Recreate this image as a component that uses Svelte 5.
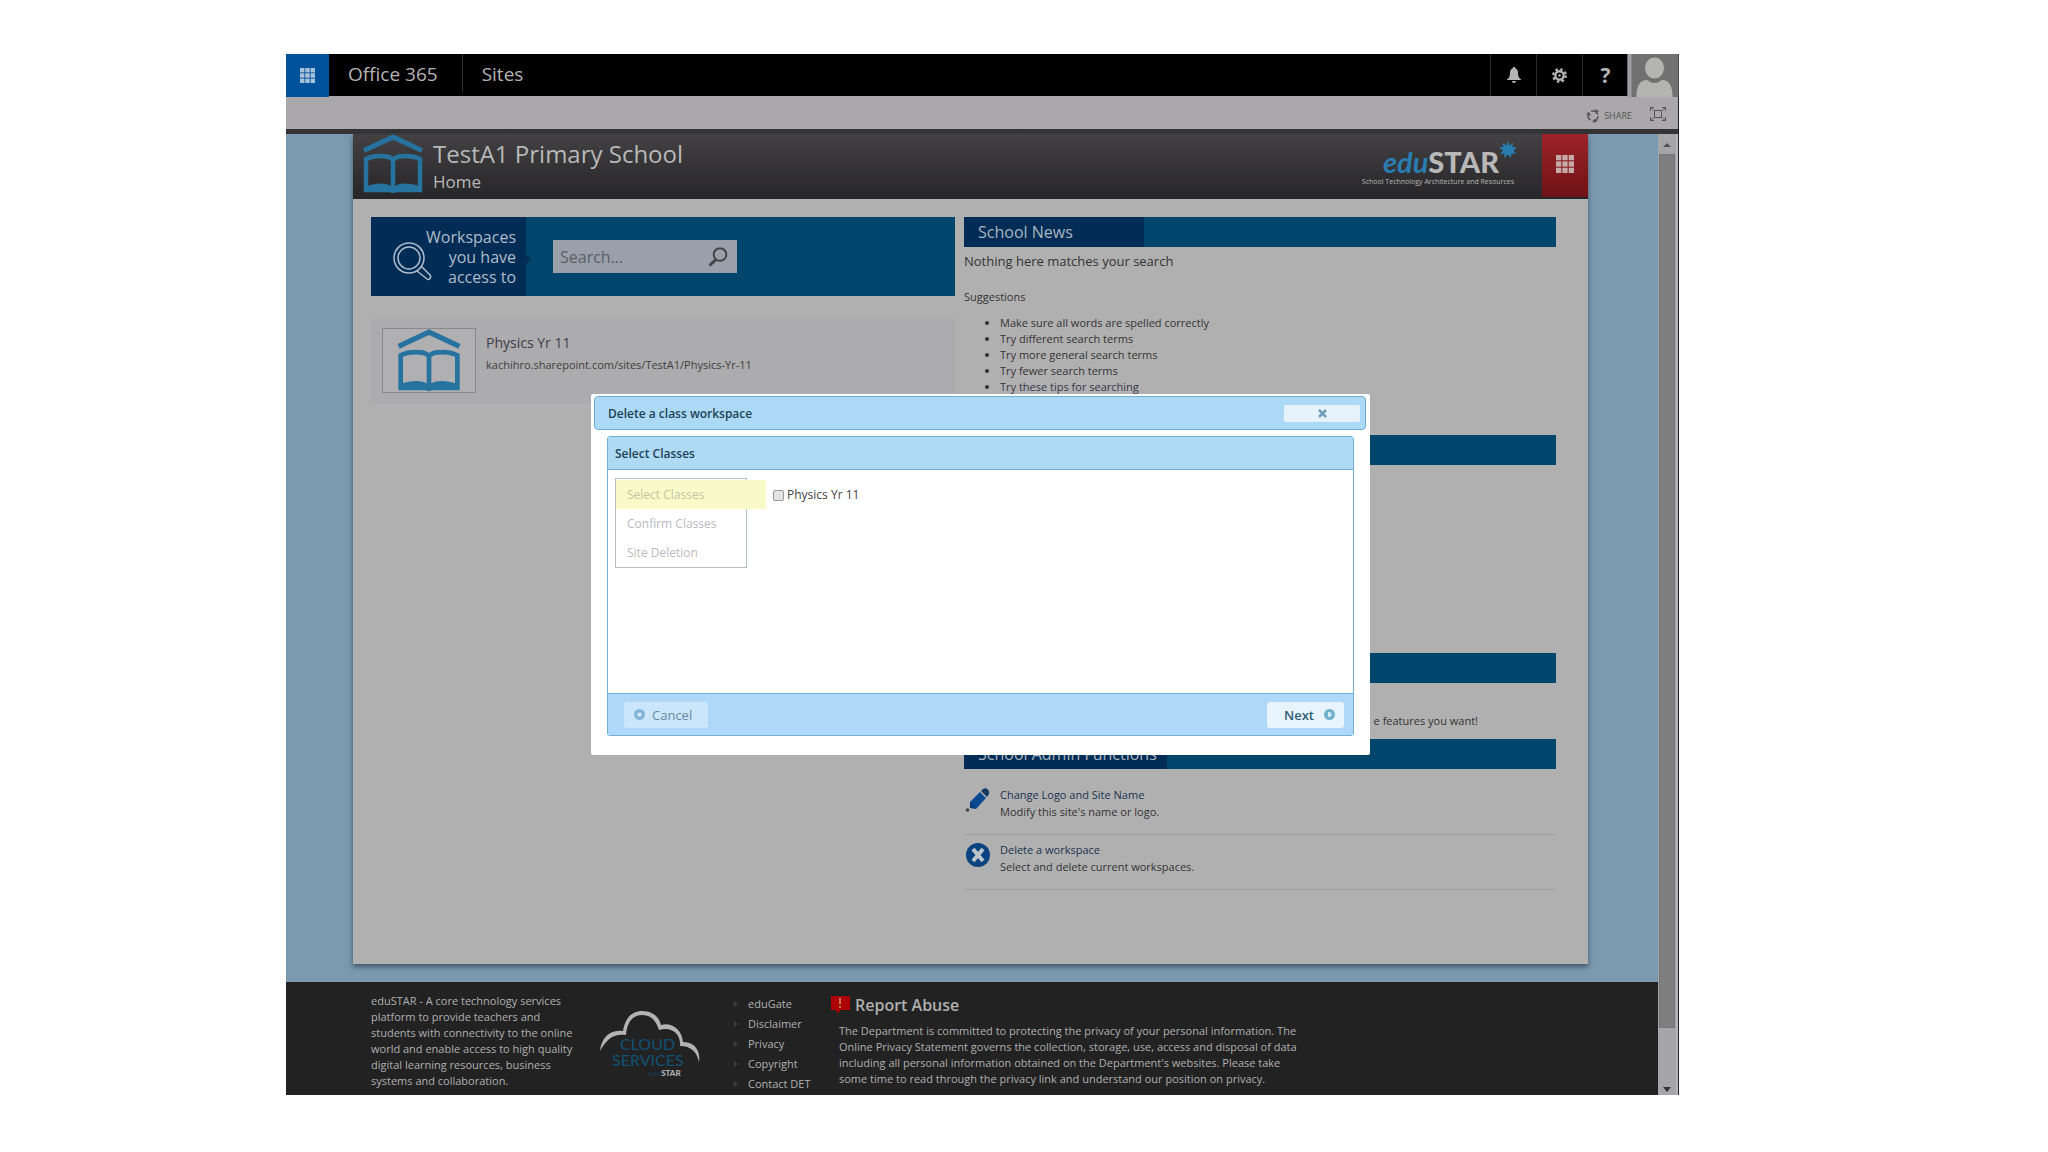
<script>
  const tips = [
    'Make sure all words are spelled correctly',
    'Try different search terms',
    'Try more general search terms',
    'Try fewer search terms',
  ];
  const steps = ['Select Classes', 'Confirm Classes', 'Site Deletion'];
  const links = ['eduGate', 'Disclaimer', 'Privacy', 'Copyright', 'Contact DET'];
  const dots = [0, 1, 2];
</script>

{#snippet waffle(size)}
  <svg width={size} height={size} viewBox="0 0 17 17" aria-hidden="true">
    {#each dots as r}
      {#each dots as c}
        <rect x={c * 6} y={r * 6} width="5" height="5" fill="currentColor" />
      {/each}
    {/each}
  </svg>
{/snippet}

{#snippet book()}
  <svg class="book" viewBox="0 0 60 60" aria-hidden="true">
    <path d="M1 16.500L30 3l29 13.500" fill="none" stroke="currentColor" stroke-width="5" />
    <path d="M30 26c-3-4-8-4-13-4-5 0-9 .5-14 3v31h24l3 1 3-1h24V25c-5-2.500-9-3-14-3-5 0-10 0-13 4zv30" fill="none" stroke="currentColor" stroke-width="4.500" />
    <path d="M4 52c9-3 19-4 26 1 7-5 17-4 26-1v5H4z" fill="currentColor" />
  </svg>
{/snippet}

<div class="page">
  <div class="frame">
    <header class="suite">
      <button class="launcher" aria-label="App launcher">{@render waffle(15)}</button>
      <a class="brand" href="#office">Office 365</a>
      <a class="sites" href="#sites">Sites</a>
      <span class="grow"></span>
      <button class="tool" aria-label="Notifications">
        <svg width="14" height="16" viewBox="0 0 14 16"><path d="M7 0c1 0 1.500.7 1.500 1.600C10.500 2.300 11 4 11 6c0 3.500 1 5 3 6.500V13H0v-.5C2 11 3 9.500 3 6c0-2 .5-3.700 2.500-4.400C5.500.7 6 0 7 0zM5 14h4c0 1-.8 2-2 2s-2-1-2-2z" fill="currentColor" /></svg>
      </button>
      <button class="tool" aria-label="Settings">
        <svg width="15" height="15" viewBox="0 0 16 16"><circle cx="8" cy="8" r="4.500" fill="none" stroke="currentColor" stroke-width="2.600" /><circle cx="8" cy="8" r="6.700" fill="none" stroke="currentColor" stroke-width="2.400" stroke-dasharray="2.700 2.560" /><circle cx="8" cy="8" r="1.300" fill="currentColor" /></svg>
      </button>
      <button class="tool help" aria-label="Help">?</button>
      <button class="avatar" aria-label="Profile">
        <svg width="52" height="43" viewBox="0 0 51 43"><rect width="51" height="43" fill="#717171" /><rect width="4" height="43" fill="#9a9da3" /><path d="M9 43c0-11 3-17 11-17 2 2 4 3 7 3s5-1 7-3c8 0 11 6 11 17z" fill="#b4b4b2" /><ellipse cx="27" cy="14" rx="10" ry="11" fill="#b4b4b2" stroke="#717171" /></svg>
      </button>
    </header>

    <div class="ribbon">
      <button class="share">
        <svg width="14" height="14" viewBox="0 0 14 14"><circle cx="7" cy="7" r="5" fill="none" stroke="currentColor" stroke-width="1.500" stroke-dasharray="8 2.470" /><path d="M0 5l3-2 2 4zM9 0l4 2-3 3zM7 14l1-4 4 2z" fill="currentColor" /></svg>
        SHARE
      </button>
      <button class="focus" aria-label="Focus on content">
        <svg width="16" height="14" viewBox="0 0 16 14" fill="none" stroke="currentColor"><rect x="4.500" y="3.500" width="7" height="7" /><path d="M.5 4V.5H4M.5.5l3 2.500M12 .5h3.500V4M15.500.5l-3 2.500M.5 10v3.500H4M.5 13.500l3-2.500M12 13.500h3.500V10M15.500 13.500l-3-2.500" /></svg>
      </button>
    </div>

    <div class="body">
      <div class="scroll">
        <main class="sheet">
          <div class="masthead">
            {@render book()}
            <div class="titles">
              <h1>TestA1 Primary School</h1>
              <a href="#home">Home</a>
            </div>
            <span class="grow"></span>
            <div class="edustar">
              <div class="word"><i>edu</i><b>STAR</b>
                <svg width="18" height="18" viewBox="0 0 18 18"><path d="M9 0l1.500 4.500L14 1.500l-.5 4.500 4.500.5-3.500 3L17 13l-4.500-.5L12 17l-3-3.500L5 17l.5-4.500L1 13l3-3.500L0 6.500 4.500 6 3 2l4.500 2.500z" fill="#2a7db1" /></svg>
              </div>
              <small>School Technology Architecture and Resources</small>
            </div>
            <button class="red" aria-label="Menu">{@render waffle(18)}</button>
          </div>

          <div class="columns">
            <section class="left">
              <div class="finder">
                <div class="finder-label">
                  <svg width="42" height="40" viewBox="0 0 42 40" fill="none" stroke="currentColor" stroke-width="1.500"><circle cx="17" cy="16" r="15" /><circle cx="17" cy="16" r="11" /><path d="M25 29l10 8c2 1.500 5-1.500 3-4l-9-9" /></svg>
                  <span>Workspaces<br />you have<br />access to</span>
                </div>
                <form class="search">
                  <input type="text" aria-label="Search workspaces" placeholder="Search..." />
                  <button type="button" aria-label="Search">
                    <svg width="20" height="20" viewBox="0 0 20 20" fill="none" stroke="currentColor"><circle cx="12" cy="7.500" r="6.300" stroke-width="2" /><path d="M8 12.500L1.500 18.500" stroke-width="3" /></svg>
                  </button>
                </form>
              </div>
              <article class="workspace">
                <div class="thumb">{@render book()}</div>
                <div>
                  <a href="#physics">Physics Yr 11</a>
                  <p>kachihro.sharepoint.com/sites/TestA1/Physics-Yr-11</p>
                </div>
              </article>
            </section>

            <section class="right">
              <div class="news">
                <h2><span>School News</span></h2>
                <p class="none">Nothing here matches your search</p>
                <p class="suggest">Suggestions</p>
                <ul>
                  {#each tips as tip}<li>{tip}</li>{/each}
                  <li><a href="#tips">Try these tips for searching</a></li>
                </ul>
              </div>
              <div class="block"><h2></h2></div>
              <div class="promo">
                <h2></h2>
                <p>e features you want!</p>
              </div>
              <h2><span>School Admin Functions</span></h2>
              <div class="admin first">
                <svg width="28" height="28" viewBox="0 0 28 28"><path d="M6 16L16 6l6 6-10 11-6-2z" fill="#0b4a92" /><path d="M17 5l2-2c3-2 7 1 6 5l-2 3z" fill="#173a63" /><path d="M6 16l6 7-6-1z" fill="#0a3a74" /><circle cx="3.500" cy="24" r="1.800" fill="#444" /></svg>
                <div><a href="#logo">Change Logo and Site Name</a><p>Modify this site's name or logo.</p></div>
              </div>
              <div class="admin">
                <svg width="28" height="28" viewBox="0 0 28 28"><circle cx="14" cy="14" r="12" fill="#0a4380" /><path d="M9 8l10 12M19 8L9 20" stroke="#bcc4cc" stroke-width="4" /></svg>
                <div><a href="#delete">Delete a workspace</a><p>Select and delete current workspaces.</p></div>
              </div>
            </section>
          </div>
        </main>

        <footer>
          <p class="about">eduSTAR - A core technology services platform to provide teachers and students with connectivity to the online world and enable access to high quality digital learning resources, business systems and collaboration.</p>
          <svg class="cloud" width="106" height="74" viewBox="0 0 106 74" role="img" aria-label="Cloud Services eduSTAR">
            <path d="M2 43C3 30 12 21 25 23 27 9 35 3 44 3c11 0 17 6 19 14 10-3 21 4 22 17 10 0 18 7 16 20-2-10-8-16-19-16 1-12-8-20-21-16C57 10 51 7 44 7c-9 0-15 7-16 20C15 25 8 32 2 43z" fill="#b2b2b2" />
            <text x="22" y="42" font-size="16">CLOUD</text>
            <text x="14" y="58" font-size="16">SERVICES</text>
            <text x="50" y="68" font-size="8"><tspan fill="#173c50">edu</tspan><tspan font-weight="900" fill="#b2b2b2">STAR</tspan></text>
          </svg>
          <ul class="links">
            {#each links as l}<li><a href="#{l}">{l}</a></li>{/each}
          </ul>
          <div class="abuse">
            <h3>
              <svg width="20" height="20" viewBox="0 0 20 20"><path d="M1 1h19v14H10l-2 4-2-4H1z" fill="#ae0006" /><path d="M10 3v6M10 11v2" stroke="#c9a15a" stroke-width="1.500" /></svg>
              Report Abuse
            </h3>
            <p>The Department is committed to protecting the privacy of your personal information. The Online Privacy Statement governs the collection, storage, use, access and disposal of data including all personal information obtained on the Department's websites. Please take some time to read through the privacy link and understand our position on privacy.</p>
          </div>
        </footer>
      </div>
      <div class="bar" aria-hidden="true">
        <svg width="18" height="20" viewBox="0 0 18 20"><path d="M5 13l4-4 4 4z" fill="#555" /></svg>
        <div class="thumb-bar"></div>
        <svg width="18" height="12" viewBox="0 0 18 12"><path d="M5 4h8l-4 5z" fill="#333" /></svg>
      </div>
    </div>

    <div class="dialog" role="dialog" aria-label="Delete a class workspace">
      <div class="dialog-title">
        <strong>Delete a class workspace</strong>
        <button aria-label="Close">
          <svg width="9" height="9" viewBox="0 0 9 9"><path d="M1 1l7 7M8 1L1 8" stroke="#6d9db7" stroke-width="2.500" /></svg>
        </button>
      </div>
      <div class="panel">
        <h2 class="panel-head">Select Classes</h2>
        <div class="panel-body">
          <ol>
            {#each steps as s, i}<li class:current={i === 0}>{s}</li>{/each}
          </ol>
          <label><input type="checkbox" /><span>Physics Yr 11</span></label>
        </div>
        <div class="panel-foot">
          <button class="cancel">
            <svg width="11" height="11" viewBox="0 0 11 11"><circle cx="5.500" cy="5.500" r="5.500" fill="#83b5d8" /><path d="M4 4l3 3M7 4L4 7" stroke="#d5eafb" stroke-width="2" /></svg>
            Cancel
          </button>
          <button class="next">
            Next
            <svg width="11" height="11" viewBox="0 0 11 11"><circle cx="5.500" cy="5.500" r="5.500" fill="#6fb0ca" /><path d="M4 3h2l2 2.500L6 8H4z" fill="#d5eafb" /></svg>
          </button>
        </div>
      </div>
    </div>
  </div>
</div>

<style>
  :global(body) { background: #fefefe; }
  .page {
    padding: 54px 369px 56px 286px;
    font: 11px/16px 'Open Sans', 'Noto Sans', sans-serif;
    color: #333;
  }
  .page :global(*) { box-sizing: border-box; }
  svg { display: block; flex: none; }
  h1, h2, h3, p, ul, ol { margin: 0; padding: 0; font-weight: 400; }
  a { color: inherit; text-decoration: none; }
  button { font: inherit; color: inherit; border: 0; padding: 0; background: none; display: flex; align-items: center; justify-content: center; }
  .grow { flex: 1; }
  .frame { position: relative; border-right: 1px solid #18222c; }

  .suite { display: flex; height: 42px; background: #000; color: #b4b4b4; font-size: 19px; line-height: 41px; }
  .launcher { width: 43px; height: 43px; background: #00529a; color: #a8c2dc; }
  .brand { padding: 0 24px 0 19px; }
  .sites { padding-left: 19px; border-left: 1px solid #333; height: 38px; }
  .tool { width: 46px; border-left: 1px solid #2b2b2b; }
  .help { font-size: 21px; font-weight: 700; }
  .avatar { width: 50px; height: 43px; }

  .ribbon { display: flex; justify-content: flex-end; gap: 18px; height: 38px; padding: 2px 12px 0 0; background: #aaa8aa; border-bottom: 5px solid #343436; color: #555; }
  .share { gap: 4px; font-size: 9px; padding-top: 5px; }

  .body { display: flex; background: #7b99af; }
  .scroll { flex: 1; min-width: 0; }
  .sheet { margin: 0 70px 18px 67px; min-height: 830px; background: #b1b0b1; box-shadow: 0 3px 5px #40556a; }
  .masthead { display: flex; height: 65px; background: linear-gradient(#434144, #262527); color: #b8b8b8; }
  .book { width: 60px; height: 60px; color: #27739f; }
  .masthead .book { margin-left: 10px; }
  .titles { padding-left: 10px; }
  h1 { font-size: 24px; line-height: 40px; }
  .titles a { display: block; font-size: 17px; line-height: 16px; }
  .edustar { width: 160px; margin-right: 24px; padding-top: 7px; }
  .word { display: flex; justify-content: flex-end; font: 700 29px/42px Lato, sans-serif; height: 35px; padding-right: 1px; color: #b8b8b8; }
  .word i { color: #2a7db1; }
  small { display: block; font-size: 7px; line-height: 12px; white-space: nowrap; text-align: center; }
  .red { width: 46px; height: 63px; padding-bottom: 3px; background: linear-gradient(#9c2428, #6f1217); color: #c5aaa6; }

  .columns { display: grid; grid-template-columns: 584fr 592fr; gap: 9px; padding: 18px 32px 0 18px; }
  .finder { display: flex; align-items: center; height: 79px; background: #00456b; }
  .finder-label { display: flex; align-items: center; justify-content: flex-end; width: 155px; height: 79px; padding-right: 10px; background: #002c55; color: #b0bccb; font-size: 16px; line-height: 20px; text-align: right; position: relative; }
  .finder-label svg { position: absolute; left: 21px; top: 25px; }
  .finder-label::after { content: ''; position: absolute; left: 155px; top: 37px; border: 5px solid transparent; border-left-color: #002c55; }
  .search { display: flex; width: 184px; height: 33px; margin-left: 27px; background: #9aa0ab; color: #444; }
  .search input { flex: 1; min-width: 0; border: 0; background: none; padding: 0 7px; font: inherit; font-size: 16px; outline: 0; }
  .search input::placeholder { color: #5b5e64; opacity: 1; }
  .search button { width: 38px; }
  .workspace { display: flex; gap: 10px; margin-top: 22px; padding: 10px 11px; height: 86px; background: #acabad; }
  .thumb { display: flex; justify-content: center; width: 94px; height: 65px; border: 1px solid #89898c; background: #b0b0b3; }
  .thumb .book { width: 64px; height: 63px; }
  .workspace a { display: block; padding-top: 3px; font-size: 14px; line-height: 24px; color: #3f3c4e; }
  .workspace p { font-size: 11px; line-height: 20px; color: #3e3e42; }

  .right h2 { display: flex; height: 30px; background: #00456b; color: #a9b6c2; font-size: 16px; line-height: 30px; }
  .right h2 span { min-width: 180px; padding: 0 10px 0 14px; background: #002c55; }
  .news { height: 218px; }
  .none { font-size: 13px; line-height: 28px; }
  .suggest { margin-top: 14px; }
  .news ul { padding: 10px 0 0 36px; }
  .news li a { color: #36364a; }
  .block { height: 218px; }
  .promo { height: 86px; }
  .promo p { padding: 30px 78px 0 0; text-align: right; }
  .admin { display: flex; gap: 8px; height: 55px; padding-top: 6px; border-bottom: 1px solid #9f9fa1; line-height: 17px; }
  .admin.first { margin-top: 11px; }
  .admin a { color: #17344f; }

  footer { display: flex; height: 113px; padding: 11px 0 0 85px; background: #222223; color: #b0b0b0; overflow: hidden; }
  .about { width: 210px; margin-right: 17px; }
  .cloud { margin-top: 15px; font-family: Lato, sans-serif; fill: #125272; }
  .links { width: 88px; padding-top: 1px; margin-left: 30px; list-style: none; line-height: 20px; }
  .links li { display: flex; align-items: center; gap: 7px; white-space: nowrap; }
  .links li::before { content: ''; border: 3px solid transparent; border-left: 4px solid #3c3f44; }
  .abuse { width: 480px; padding-top: 1px; margin-left: 8px; }
  .abuse h3 { display: flex; align-items: center; gap: 5px; height: 22px; font-size: 16px; font-weight: 600; }
  .abuse p { padding: 7px 0 0 9px; }

  .bar { display: flex; flex-direction: column; width: 20px; background: #a6a5a9; border-right: 2px solid #b5b5b8; }
  .thumb-bar { flex: 1; margin: 0 1px 55px; background: #7f7f7f; border: 1px solid #747476; }

  .dialog { position: absolute; left: 305px; right: 308px; top: 340px; padding: 2px 4px 19px 3px; background: #fff; border-radius: 2px; color: #234254; }
  .dialog-title { display: flex; align-items: center; justify-content: space-between; height: 34px; padding: 0 5px 0 13px; background: #acdaf6; border: 1px solid #70aed2; border-radius: 4px; font-size: 12px; }
  strong { padding-top: 2px; font-weight: 600; }
  .dialog-title button { width: 76px; height: 17px; background: #e6f2fc; border-radius: 2px; }
  .panel { margin: 6px 12px 0 13px; border: 1px solid #70aed2; border-radius: 3px; }
  .panel-head { height: 33px; padding-left: 7px; border-bottom: 1px solid #70aed2; background: #aedaf6; font-size: 12px; font-weight: 600; line-height: 34px; }
  .panel-body { display: flex; min-height: 223px; padding: 8px 7px; align-items: flex-start; }
  ol { width: 132px; padding-top: 1px; list-style: none; border: 1px solid #b2bfc4; color: #bdb9bf; font-size: 12px; line-height: 29px; }
  li.current { width: 150px; background: #fafac8; color: #c3c3a4; }
  ol li { padding-left: 11px; }
  label { display: flex; align-items: center; gap: 3px; margin: 9px 0 0 26px; font-size: 12px; line-height: 16px; color: #444; }
  label input { appearance: none; width: 11px; height: 11px; margin: 0; border: 1px solid #999; border-radius: 2px; background: #e3e3e3; }
  .panel-foot { display: flex; align-items: center; justify-content: space-between; height: 42px; padding: 0 9px 0 16px; border-top: 1px solid #70aed2; background: #afd8f8; font-size: 13px; }
  .panel-foot button { gap: 7px; width: 84px; height: 26px; border-radius: 3px; background: #cbe5fb; color: #648aa3; }
  .panel-foot .cancel { justify-content: flex-start; padding-left: 10px; }
  .panel-foot .next { justify-content: flex-end; gap: 10px; width: 77px; padding-right: 9px; background: #e8f4fd; color: #2f5c75; font-weight: 600; }
</style>
